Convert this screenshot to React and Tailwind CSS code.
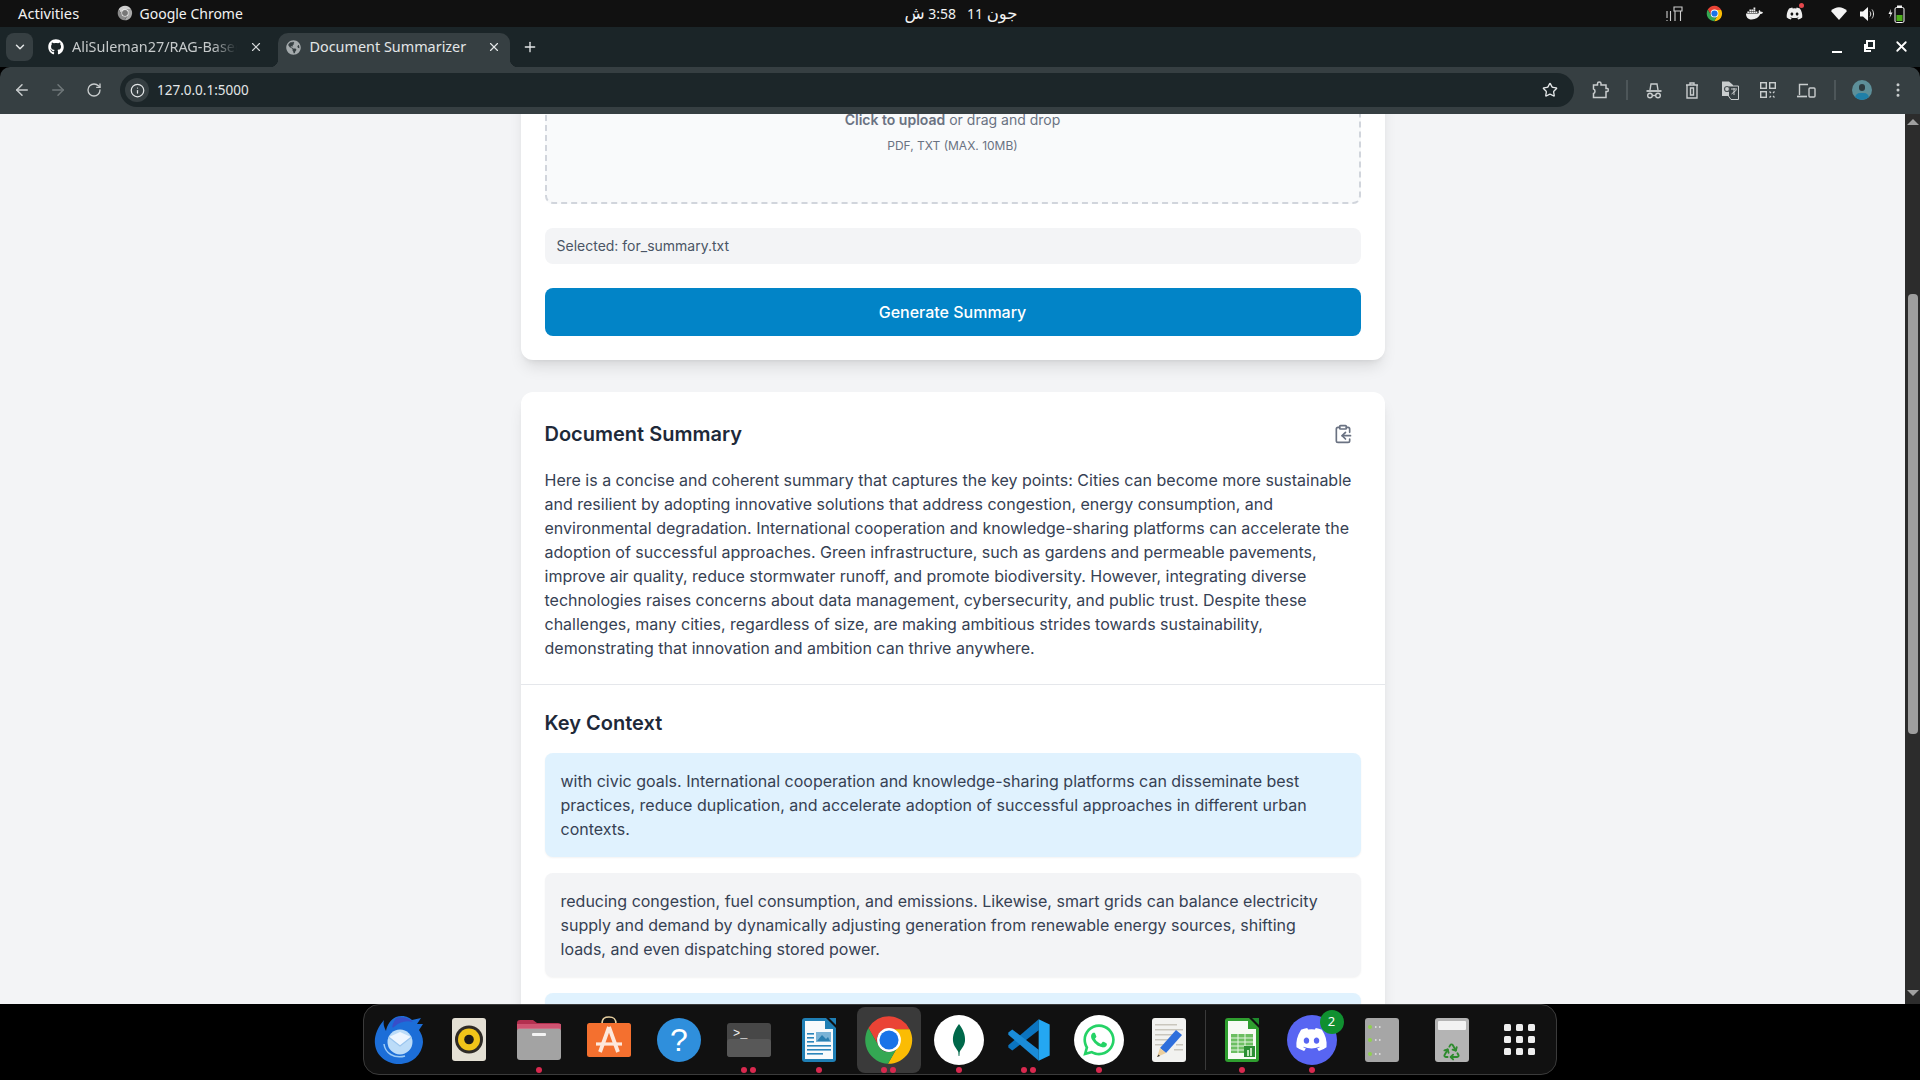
import React from "react";
import {
  ArrowLeft, ArrowRight, RotateCw, Info, X, Plus, ChevronDown, ClipboardCopy, Star,
  EllipsisVertical, Recycle,
} from "lucide-react";
import { FaGithub, FaDocker, FaDiscord, FaWhatsapp, FaGlobeAmericas } from "react-icons/fa";

function ChromeLogo({ size = 50, gray = false }) {
  const c = gray ? ["#cfcfcf", "#a8a8a8", "#8a8a8a", "#777"] : ["#ea4335", "#fbbc04", "#34a853", "#1a73e8"];
  return (
    <svg width={size} height={size} viewBox="0 0 48 48">
      <path fill={c[0]} d="M24 2A22 22 0 0 0 5 13L14.5 29.5A10 10 0 0 1 24 14L43 14A22 22 0 0 0 24 2Z" />
      <path fill={c[1]} d="M43 14L24 14A10 10 0 0 1 32.7 29L23 46A22 22 0 0 0 43 14Z" />
      <path fill={c[2]} d="M5 13A22 22 0 0 0 23 46L32.7 29A10 10 0 0 1 14.5 29.5Z" />
      <circle cx="24" cy="24" r="11" fill="#fff" />
      <circle cx="24" cy="24" r="8.8" fill={c[3]} />
    </svg>
  );
}

function Thunderbird() {
  return (
    <svg width="50" height="50" viewBox="0 0 50 50">
      <path fill="#1c6ed8" d="M10 5C3 13 0 22 1 29C2 41 13 49 25 49C38 49 48 40 49 27C49 22 47 18 45 15L49 9L43 9L47 3L38 5C34 1 27 0 22 2C17 4 13 10 12 16C10 12 9 9 10 5Z" />
      <path fill="#4a3bc0" opacity="0.6" d="M22 3C28 1 35 3 39 7C32 5 25 7 20 12C18 14 17 11 22 3Z" />
      <path fill="none" stroke="#9ccbf6" strokeWidth="1.5" d="M10 29C11 38 20 44 31 41" />
      <circle cx="26" cy="27" r="12.5" fill="#bcdcf8" />
      <path fill="#eef6ff" d="M15 22L26 17L37 22L26 31Z" />
      <path fill="none" stroke="#9cc6ee" strokeWidth="1.2" d="M14.500 22L26 31L37.500 22" />
    </svg>
  );
}

function Rhythmbox() {
  return (
    <svg width="34" height="43" viewBox="0 0 34 43">
      <rect width="34" height="43" rx="3" fill="#e4e0d4" />
      <circle cx="17" cy="21.500" r="14" fill="#2f2b27" />
      <circle cx="17" cy="21.500" r="11" fill="#f0c419" />
      <circle cx="17" cy="21.500" r="4.800" fill="#1d1b18" />
    </svg>
  );
}

function Files() {
  return (
    <svg width="44" height="41" viewBox="0 0 44 41">
      <path fill="#b3304f" d="M0 4a3 3 0 0 1 3-3h13l4 3h21a3 3 0 0 1 3 3v12H0Z" />
      <rect y="9" width="44" height="32" rx="3" fill="#a3a3a3" />
      <rect y="5" width="44" height="5" fill="#d8607c" opacity="0.75" />
      <rect x="15" y="14" width="14" height="3" rx="1" fill="#f3f3f3" />
    </svg>
  );
}

function AppStore() {
  return (
    <svg width="44" height="41" viewBox="0 0 44 41" className="-translate-y-[3px]">
      <path d="M15 8C15 2 18 1 22 1C26 1 29 2 29 8" fill="none" stroke="#e6cfa0" strokeWidth="1.6" />
      <rect y="7" width="44" height="34" rx="2.500" fill="#f4702f" />
      <path d="M22 11L13 36M22 11L31 36" stroke="#fde8dc" strokeWidth="3.800" fill="none" />
      <path d="M9 28H35" stroke="#fde8dc" strokeWidth="3.200" />
    </svg>
  );
}

function Help() {
  return (
    <svg width="44" height="44" viewBox="0 0 44 44">
      <circle cx="22" cy="22" r="22" fill="#2f8fdc" />
      <text x="22" y="33" textAnchor="middle" fontSize="32" fill="#fff" fontFamily="'Liberation Sans', sans-serif">?</text>
    </svg>
  );
}

function Terminal() {
  return (
    <svg width="44" height="34" viewBox="0 0 44 34">
      <rect width="44" height="34" rx="3" fill="#474747" />
      <rect y="16" width="44" height="18" rx="3" fill="#585858" />
      <text x="6" y="14" fontSize="12" fill="#f2f2f2" fontFamily="'Liberation Mono', monospace">&gt;_</text>
    </svg>
  );
}

function Writer() {
  return (
    <svg width="34" height="44" viewBox="0 0 34 44">
      <path fill="#1f7fb5" d="M3 0H24L34 10V41a3 3 0 0 1-3 3H3a3 3 0 0 1-3-3V3a3 3 0 0 1 3-3Z" />
      <path fill="#f7fafc" d="M3 3H23V11H31V41H3Z" />
      <path fill="#1f7fb5" d="M27 0L34 7V0Z" />
      <rect x="14" y="14" width="15" height="10" fill="#7ab3d6" />
      <path fill="#2a7fb0" d="M15 23L20 17L24 21L26 19L28 23Z" />
      <g fill="#2a85bb">
        <rect x="5" y="15" width="7" height="1.6" />
        <rect x="5" y="19" width="7" height="1.6" />
        <rect x="5" y="23" width="7" height="1.6" />
        <rect x="5" y="27" width="24" height="1.6" />
        <rect x="5" y="31" width="24" height="1.6" />
        <rect x="5" y="35" width="16" height="1.6" />
      </g>
    </svg>
  );
}

function Mongo() {
  return (
    <svg width="50" height="50" viewBox="0 0 50 50">
      <circle cx="25" cy="25" r="25" fill="#fff" />
      <path fill="#00684a" d="M25 9C21 14 18.5 20 19 26C19.5 31 23 34 24.3 37L24.6 41H25.4L25.7 37C27 34 30.5 31 31 26C31.5 20 29 14 25 9Z" />
    </svg>
  );
}

function VSCode() {
  return (
    <svg width="44" height="44" viewBox="0 0 100 100">
      <polygon fill="#0b74bf" points="72,3 72,28 12,74 3,67 3,62" />
      <polygon fill="#1a8cd8" points="3,38 3,33 12,26 72,72 72,97" />
      <polygon fill="#24a7f2" points="72,3 97,15 97,85 72,97" />
    </svg>
  );
}

function Gedit() {
  return (
    <svg width="34" height="44" viewBox="0 0 34 44">
      <rect width="34" height="44" rx="3" fill="#f2f2f0" />
      <g fill="#c9c6bd">
        <rect x="3" y="6" width="22" height="1.5" />
        <rect x="3" y="11" width="28" height="1.5" />
        <rect x="3" y="16" width="18" height="1.5" />
        <rect x="3" y="21" width="14" height="1.5" />
        <rect x="3" y="26" width="11" height="1.5" />
        <rect x="24" y="26" width="7" height="1.5" />
        <rect x="22" y="31" width="9" height="1.5" />
      </g>
      <path fill="#2f6fdc" d="M24 12L30 17L14 35L8 30Z" />
      <path fill="#eccf9e" d="M8 30L14 35L5 39Z" />
      <path fill="#333" d="M6.5 36.5L8 38L5 39Z" />
    </svg>
  );
}

function Calc() {
  return (
    <svg width="34" height="44" viewBox="0 0 34 44">
      <path fill="#2f9e2f" d="M3 0H24L34 10V41a3 3 0 0 1-3 3H3a3 3 0 0 1-3-3V3a3 3 0 0 1 3-3Z" />
      <path fill="#f7fbf5" d="M3 3H23V11H31V41H3Z" />
      <path fill="#1e8a2b" d="M27 0L34 7V0Z" />
      <rect x="6" y="16" width="22" height="19" fill="#6cbf62" />
      <path stroke="#e6f5e2" strokeWidth="1" d="M6 20H28M6 24H28M6 28H28M6 32H28M13 16V35M20 16V35" />
      <rect x="19" y="28" width="11" height="11" fill="#2c8f35" />
      <rect x="22" y="32" width="2" height="6" fill="#bfe5b8" />
      <rect x="25" y="30" width="2" height="8" fill="#bfe5b8" />
    </svg>
  );
}

function Server() {
  return (
    <svg width="34" height="44" viewBox="0 0 34 44">
      <rect width="34" height="44" rx="3" fill="#a6a6a6" />
      {[9, 22, 36].map((y) => (
        <g key={y}>
          <circle cx="5" cy={y} r="2" fill="#8fd14f" />
          <rect x="10" y={y - 1} width="1.5" height="2" fill="#d8d8d8" />
          <rect x="14" y={y - 1} width="1.5" height="2" fill="#d8d8d8" />
        </g>
      ))}
    </svg>
  );
}

function TrashCan() {
  return (
    <div className="relative flex h-[44px] w-[34px] flex-col items-center rounded-[3px] bg-[#b4b4b4]">
      <div className="mt-[3px] h-[9px] w-[28px] rounded-[1px] bg-[#f2f2f2]" />
      <Recycle size={19} strokeWidth={2.4} className="mt-[12px] text-[#2e8b2e]" />
    </div>
  );
}

function Grid() {
  return (
    <div className="grid -translate-x-[2px] grid-cols-3 gap-[5px]">
      {[0, 1, 2, 3, 4, 5, 6, 7, 8].map((i) => (
        <div key={i} className="h-[7px] w-[7px] rounded-[1.5px] bg-[#eeeeee]" />
      ))}
    </div>
  );
}

function DockItem({ dots = 0, active = false, children }) {
  return (
    <div className="flex h-[71px] w-[70px] shrink-0 items-center justify-center">
      <div className={"relative flex h-[66px] w-[64px] items-center justify-center rounded-lg " + (active ? "bg-[#3a3a3a]" : "")}>
        {children}
        {dots > 0 && (
          <div className="absolute bottom-[0px] left-0 right-0 flex justify-center gap-[3px]">
            {Array.from({ length: dots }).map((_, i) => (
              <span key={i} className="h-[6px] w-[6px] rounded-full bg-[#d9294f]" />
            ))}
          </div>
        )}
      </div>
    </div>
  );
}

function Dock() {
  return (
    <div className="flex h-[76px] shrink-0 justify-center bg-black pr-[1px]">
      <div className="box-border flex h-[71px] w-[1194px] items-center rounded-2xl border border-[#3b3b3b] bg-[#111111]">
        <DockItem><Thunderbird /></DockItem>
        <DockItem><Rhythmbox /></DockItem>
        <DockItem dots={1}><Files /></DockItem>
        <DockItem><AppStore /></DockItem>
        <DockItem><Help /></DockItem>
        <DockItem dots={2}><Terminal /></DockItem>
        <DockItem dots={1}><Writer /></DockItem>
        <DockItem dots={2} active><ChromeLogo size={52} /></DockItem>
        <DockItem dots={1}><Mongo /></DockItem>
        <DockItem dots={2}><VSCode /></DockItem>
        <DockItem dots={1}>
          <div className="flex h-[50px] w-[50px] items-center justify-center rounded-full bg-white">
            <FaWhatsapp size={36} color="#25d366" />
          </div>
        </DockItem>
        <DockItem><Gedit /></DockItem>
        <div className="mx-[1px] h-[60px] w-[1px] shrink-0 bg-[#3a3a3a]" />
        <DockItem dots={1}><Calc /></DockItem>
        <DockItem dots={1}>
          <div className="relative flex h-[50px] w-[50px] items-center justify-center rounded-full bg-[#5865f2]">
            <FaDiscord size={33} color="#fff" />
            <span className="absolute right-[-7px] top-[-5px] flex h-[24px] w-[24px] items-center justify-center rounded-full bg-[#109030] font-['Noto_Sans',sans-serif] text-[13px] text-white">2</span>
          </div>
        </DockItem>
        <DockItem><Server /></DockItem>
        <DockItem><TrashCan /></DockItem>
        <DockItem><Grid /></DockItem>
      </div>
    </div>
  );
}

function TopBar() {
  return (
    <div className="flex h-[27px] shrink-0 items-center bg-[#111111] font-['Noto_Sans',sans-serif] text-[14px] text-[#f2f2f2]">
      <div className="flex flex-1 items-center pl-[18px]">
        <span className="w-[98.500px] text-[14.700px]">Activities</span>
        <span className="mr-[7px]"><ChromeLogo size={16} gray /></span>
        <span>Google Chrome</span>
      </div>
      <div dir="rtl" className="mr-[7px] whitespace-pre font-['Noto_Sans','DejaVu_Sans',sans-serif]">
        <span className="text-[16.500px]">جون</span>
        <span> 11   3:58 </span>
        <span className="text-[16.500px]">ش</span>
      </div>
      <div className="flex flex-1 items-center justify-end pr-[9px]">
        <div className="flex w-[40px] justify-center">
          <svg width="17" height="16" viewBox="0 0 17 16" fill="none" stroke="#cfcfcf" strokeWidth="1.1">
            <path d="M1 5V12M1 14V15M4.5 5V15M8 1H16V5H8ZM9 5V15M14.5 5V15" />
          </svg>
        </div>
        <div className="flex w-[40px] justify-center"><ChromeLogo size={17} /></div>
        <div className="flex w-[40px] justify-center"><FaDocker size={17} color="#eeeeee" /></div>
        <div className="relative mr-[10px] flex w-[40px] justify-center">
          <FaDiscord size={17} color="#eeeeee" />
          <span className="absolute right-[10px] top-[-2px] h-[5px] w-[5px] rounded-full bg-[#e5484d]" />
        </div>
        <div className="flex w-[29px] justify-center">
          <svg width="16" height="13" viewBox="0 0 16 13"><path fill="#f4f4f4" d="M0 4C4.500 -1 11.500 -1 16 4L8 13Z" /></svg>
        </div>
        <div className="flex w-[29px] justify-center">
          <svg width="15" height="14" viewBox="0 0 15 14" fill="none">
            <path fill="#f4f4f4" d="M0 4.500H3L8 0V14L3 9.500H0Z" />
            <path stroke="#e8e8e8" strokeWidth="1" d="M10 4.500C11 6 11 8 10 9.500M12 2.500C14 5 14 9 12 11.500" />
          </svg>
        </div>
        <div className="flex w-[29px] justify-center">
          <svg width="17" height="18" viewBox="0 0 17 18" fill="none">
            <path fill="#f4f4f4" d="M3 4L0.500 9H2.500L1.500 13L4.500 7.500H2.500Z" />
            <rect x="7" y="2.500" width="9" height="15" rx="1.500" stroke="#f4f4f4" />
            <rect x="9" y="0.500" width="5" height="2" fill="#f4f4f4" />
            <rect x="8.500" y="10" width="6" height="6" fill="#4caf1a" />
          </svg>
        </div>
      </div>
    </div>
  );
}

function TabStrip() {
  return (
    <div className="flex h-[40px] shrink-0 items-end bg-[#1b2528] pl-[6px] font-['Noto_Sans',sans-serif] text-[14.400px] text-[#e3e6e7]">
      <div className="mb-[6px] flex h-[28px] w-[27px] items-center justify-center rounded-lg bg-[#363f42]">
        <ChevronDown size={14} strokeWidth={2.5} color="#e3e6e7" />
      </div>
      <div className="flex h-[34px] w-[244.500px] items-center pb-[6px] pl-[15px]">
        <FaGithub size={16} color="#ffffff" />
        <span className="ml-[8px] w-[165px] overflow-hidden whitespace-nowrap text-[#c6cacb] [mask-image:linear-gradient(to_right,black_85%,transparent)]">AliSuleman27/RAG-Based-Summarizer</span>
        <X size={14} className="ml-[12px]" color="#d5d8d9" />
      </div>
      <div className="relative flex h-[34px] w-[232px] items-center rounded-t-[10px] bg-[#363f42] pb-[6px] pl-[8px]">
        <span className="absolute bottom-0 left-[-8px] h-[8px] w-[8px] bg-[radial-gradient(circle_at_0_0,transparent_8px,#363f42_8.5px)]" />
        <span className="absolute bottom-0 right-[-8px] h-[8px] w-[8px] bg-[radial-gradient(circle_at_100%_0,transparent_8px,#363f42_8.5px)]" />
        <FaGlobeAmericas size={15} color="#a5abad" />
        <span className="ml-[9px] w-[177px] whitespace-nowrap">Document Summarizer</span>
        <X size={14} color="#e3e6e7" />
      </div>
      <div className="flex h-[34px] w-[40px] items-center justify-center pb-[6px]">
        <Plus size={16} color="#e3e6e7" />
      </div>
      <div className="flex flex-1 justify-end pb-[12px] pr-[10px]">
        <div className="flex items-center gap-[16px]">
          <div className="flex h-[16px] w-[16px] items-end justify-center"><div className="mb-[2px] h-[2px] w-[10px] bg-white" /></div>
          <svg width="16" height="16" viewBox="0 0 16 16" fill="none" stroke="#fff" strokeWidth="2"><rect x="6" y="2" width="7" height="7" /><path d="M4 5V12H10" /></svg>
          <X size={17} strokeWidth={2.5} color="#fff" />
        </div>
      </div>
    </div>
  );
}

const tool = "flex w-[38px] shrink-0 justify-center";
function Toolbar() {
  return (
    <div className="flex h-[47px] shrink-0 items-center rounded-t-[10px] bg-[#363f42] pb-[1px] pl-[4px] font-['Noto_Sans',sans-serif]">
      <div className="flex w-[36px] justify-center"><ArrowLeft size={18} color="#c9cdce" /></div>
      <div className="flex w-[36px] justify-center"><ArrowRight size={18} color="#6f7779" /></div>
      <div className="flex w-[36px] justify-center"><RotateCw size={16} color="#c9cdce" /></div>
      <div className="ml-[8px] flex h-[34px] w-[1454px] items-center rounded-full bg-[#1c2629] pl-[5px] pr-[16px]">
        <div className="flex h-[24px] w-[24px] items-center justify-center rounded-full bg-[#363f42]"><Info size={15} color="#e3e6e7" /></div>
        <span className="ml-[8px] flex-1 text-[13.500px] text-[#e3e6e7]">127.0.0.1:5000</span>
        <Star size={16} color="#e3e6e7" />
      </div>
      <div className="ml-[7px] flex items-center">
        <div className={tool}>
          <svg width="17" height="18" viewBox="0 0 17 18" fill="none" stroke="#c9cdce" strokeWidth="1.5">
            <path d="M1.500 4H5.500V2.500C5.500 0.500 9 0.500 9 2.500V4H14V7.500H15.500C16.500 7.500 16.500 10.500 15.500 10.500H14V16.500H1.500V12.500C3.500 12 3.500 8.500 1.500 8Z" />
          </svg>
        </div>
        <div className="mx-[7px] h-[20px] w-[2px] shrink-0 bg-[#4d5659]" />
        <div className={tool}>
          <svg width="16" height="17" viewBox="0 0 16 17" fill="none" stroke="#c9cdce" strokeWidth="1.4">
            <path d="M4 8L5 2H11L12 8" />
            <path d="M0.500 9H15.500" strokeWidth="1.800" />
            <circle cx="4" cy="13.500" r="2.300" />
            <circle cx="12" cy="13.500" r="2.300" />
            <path d="M6.300 13.500H9.700" />
          </svg>
        </div>
        <div className={tool}>
          <svg width="14" height="17" viewBox="0 0 14 17" fill="none" stroke="#c9cdce" strokeWidth="1.4">
            <path d="M1 3H13M5 3V1H9V3M2 3V16H12V3M5.500 6V13H8.500V6Z" />
          </svg>
        </div>
        <div className={tool}>
          <svg width="17" height="19" viewBox="0 0 17 19">
            <path fill="#c9cdce" d="M0 0.500H7L11 4V15H0Z" />
            <path fill="#363f42" stroke="#c9cdce" d="M6.500 5H16.500V18.500H9L6.500 15Z" />
            <circle cx="5" cy="8" r="2.500" fill="none" stroke="#4a5255" strokeWidth="1.200" />
            <path d="M9 8H15M12 7V14M9.500 13L14.500 9" stroke="#c9cdce" fill="none" />
          </svg>
        </div>
        <div className={tool}>
          <svg width="16" height="16" viewBox="0 0 16 16" fill="none" stroke="#c9cdce" strokeWidth="1.4">
            <rect x="0.700" y="0.700" width="5.600" height="5.600" />
            <rect x="9.700" y="0.700" width="5.600" height="5.600" />
            <rect x="0.700" y="9.700" width="5.600" height="5.600" />
            <path d="M9.500 9.500L11 11M14.500 9.500L13 11M9.500 15.500L11 14M14.500 15.500L13 14" strokeWidth="1.200" />
          </svg>
        </div>
        <div className={tool}>
          <svg width="19" height="15" viewBox="0 0 19 15" fill="none" stroke="#c9cdce" strokeWidth="1.4">
            <path d="M2.500 12V1.500H11" />
            <path d="M0 13.500H10" strokeWidth="1.700" />
            <rect x="12" y="5" width="6" height="9" rx="1" />
          </svg>
        </div>
        <div className="ml-[9px] mr-[7px] h-[20px] w-[2px] shrink-0 bg-[#4d5659]" />
        <div className={tool}>
          <div className="relative h-[20px] w-[20px] overflow-hidden rounded-full bg-[#5d8f99]">
            <div className="absolute left-[7px] top-[4px] h-[7px] w-[6px] rounded-full bg-[#2c3a3e]" />
            <div className="absolute bottom-[-3px] left-[3px] h-[10px] w-[14px] rounded-full bg-[#1f7fa8]" />
          </div>
        </div>
        <div className="flex w-[34px] shrink-0 justify-center"><EllipsisVertical size={18} color="#c9cdce" /></div>
      </div>
    </div>
  );
}

function Scrollbar() {
  return (
    <div className="flex w-[15px] shrink-0 flex-col items-center bg-[#2c2c2c] pl-[1px]">
      <div className="mt-[5px] h-0 w-0 border-x-[6px] border-b-[6px] border-x-transparent border-b-[#a0a0a0]" />
      <div className="mt-[169px] h-[440px] w-[10px] rounded-[4px] bg-[#9e9e9e]" />
      <div className="mt-[256px] h-0 w-0 border-x-[6px] border-t-[6px] border-x-transparent border-t-[#a0a0a0]" />
    </div>
  );
}

const soft = "shadow-[0_1px_2px_rgba(0,0,0,0.05)]";
function Main() {
  return (
    <div className="flex-1 overflow-hidden bg-[#f3f4f6] font-['Inter',sans-serif]">
      <div className="mx-auto mt-[-95px] flex w-[864px] flex-col gap-8 pb-8">
        <div className="rounded-xl bg-white p-6 shadow-lg">
          <div className="flex h-[161px] flex-col items-center justify-end rounded-lg border-2 border-dashed border-gray-300 bg-gray-50 pb-[48px] text-gray-500">
            <p className="mb-2 text-sm"><span className="font-semibold">Click to upload</span> or drag and drop</p>
            <p className="text-xs">PDF, TXT (MAX. 10MB)</p>
          </div>
          <div className="mt-6 rounded-lg bg-gray-100 px-3 py-2 text-sm text-gray-600">Selected: for_summary.txt</div>
          <button className="mt-6 w-full rounded-lg bg-[#0284c7] py-3 text-base font-medium text-white">Generate Summary</button>
        </div>
        <div className="rounded-xl bg-white shadow-lg">
          <div className="border-b border-gray-200 p-6">
            <div className="mb-4 flex items-center justify-between">
              <h2 className="text-xl font-semibold text-gray-800">Document Summary</h2>
              <button className="p-2 text-gray-500"><ClipboardCopy size={20} /></button>
            </div>
            <p className="text-base text-gray-700">Here is a concise and coherent summary that captures the key points: Cities can become more sustainable and resilient by adopting innovative solutions that address congestion, energy consumption, and environmental degradation. International cooperation and knowledge-sharing platforms can accelerate the adoption of successful approaches. Green infrastructure, such as gardens and permeable pavements, improve air quality, reduce stormwater runoff, and promote biodiversity. However, integrating diverse technologies raises concerns about data management, cybersecurity, and public trust. Despite these challenges, many cities, regardless of size, are making ambitious strides towards sustainability, demonstrating that innovation and ambition can thrive anywhere.</p>
          </div>
          <div className="p-6">
            <h2 className="mb-4 text-xl font-semibold text-gray-800">Key Context</h2>
            <div className="flex flex-col gap-4">
              <div className={"rounded-lg bg-[#e0f2fe] p-4 text-gray-700 " + soft}>with civic goals. International cooperation and knowledge-sharing platforms can disseminate best practices, reduce duplication, and accelerate adoption of successful approaches in different urban contexts.</div>
              <div className={"rounded-lg bg-gray-100 p-4 text-gray-700 " + soft}>reducing congestion, fuel consumption, and emissions. Likewise, smart grids can balance electricity supply and demand by dynamically adjusting generation from renewable energy sources, shifting loads, and even dispatching stored power.</div>
              <div className={"rounded-lg bg-[#e0f2fe] p-4 text-gray-700 " + soft}>and community engagement to ensure that benefits are shared fairly across neighborhoods and that progress toward climate goals remains measurable.</div>
            </div>
          </div>
        </div>
      </div>
    </div>
  );
}

export default function App() {
  return (
    <div className="flex h-[1080px] w-[1920px] flex-col overflow-hidden bg-black">
      <TopBar />
      <TabStrip />
      <Toolbar />
      <div className="flex min-h-0 flex-1">
        <Main />
        <Scrollbar />
      </div>
      <Dock />
    </div>
  );
}
